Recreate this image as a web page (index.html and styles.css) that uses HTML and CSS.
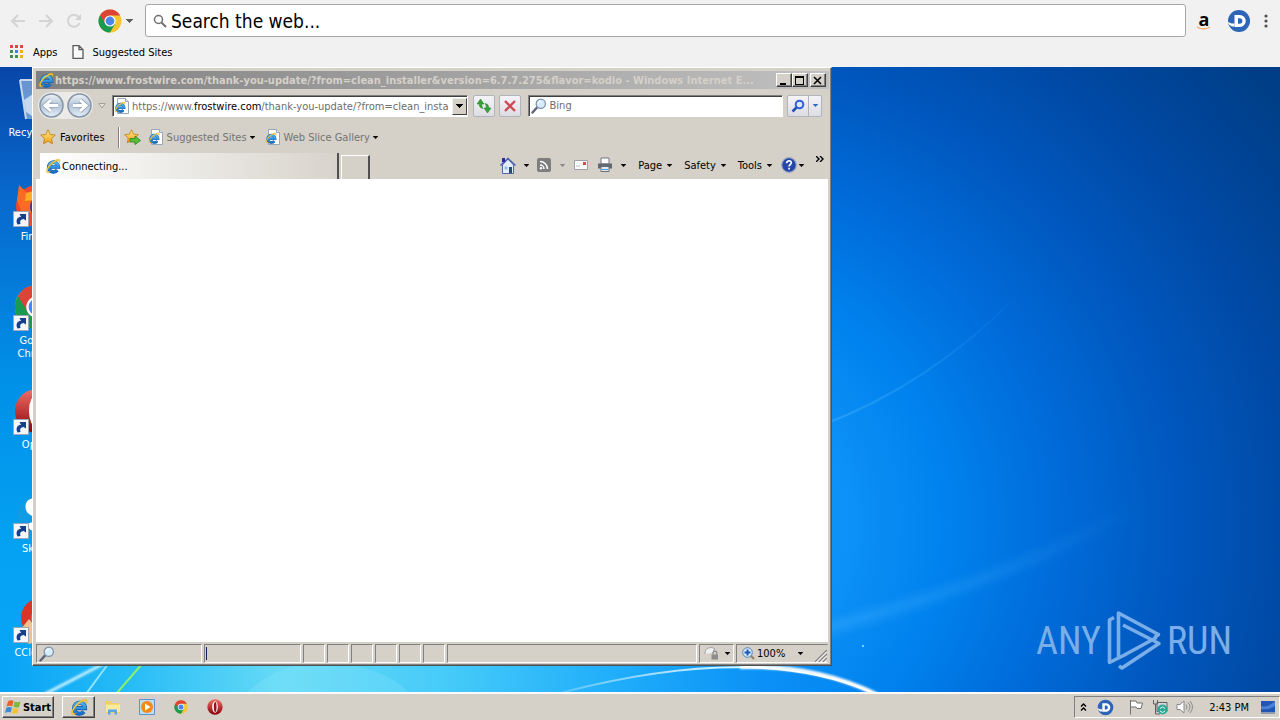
FILE: index.html
```html
<!DOCTYPE html>
<html lang="en">
<head>
<meta charset="utf-8">
<title>Desktop</title>
<link rel="stylesheet" href="styles.css">
</head>
<body>
<svg class="defs" aria-hidden="true">
  <defs>
    <linearGradient id="ieBlue" gradientUnits="userSpaceOnUse" x1="0" y1="2" x2="0" y2="15"><stop offset="0" stop-color="#5cc4f6"/><stop offset="1" stop-color="#1268c4"/></linearGradient>
    <linearGradient id="gold" x1="0" y1="0" x2="0" y2="1"><stop offset="0" stop-color="#fff08a"/><stop offset="1" stop-color="#f09a10"/></linearGradient>
    <linearGradient id="operaRed" x1="0" y1="0" x2="0" y2="1"><stop offset="0" stop-color="#f07068"/><stop offset="1" stop-color="#8c0008"/></linearGradient>
    <linearGradient id="glass" x1="0" y1="0" x2="0" y2="1"><stop offset="0" stop-color="#eef3f8"/><stop offset=".5" stop-color="#b4c4d6"/><stop offset="1" stop-color="#e4f0fa"/></linearGradient>
    <symbol id="ie" viewBox="0 0 16 16">
      <path d="M4 9h9.400A4.900 4.900 0 1 0 12.300 12.200" fill="none" stroke="#0d56a4" stroke-width="3.600"/>
      <path d="M4 9h9.400A4.900 4.900 0 1 0 12.300 12.200" fill="none" stroke="url(#ieBlue)" stroke-width="2.600"/>
      <path d="M2.500 14.800C.2 14 1.500 10 5 6.200 8.500 2.500 13 .2 14.600 1.600c.8.800.4 2.200-.3 3.400.2-1.400 0-2.200-.9-2.300-2-.2-5.400 2-8 5-2.300 2.600-3.400 5-2.500 5.800.6.500 1.700.2 3-.5-1.300 1.200-2.500 2-3.400 1.800z" fill="#ffd23c" stroke="#c98a10" stroke-width=".3"/>
    </symbol>
    <symbol id="iepage" viewBox="0 0 16 16">
      <path d="M3.500.5h8l3 3v12h-11z" fill="#fff" stroke="#9aa6b8"/>
      <path d="M11.500.5v3h3" fill="#dde6f2" stroke="#9aa6b8"/>
      <svg x="0" y="3" width="12" height="12"><use href="#ie"/></svg>
    </symbol>
    <symbol id="chrome" viewBox="0 0 24 24">
      <circle cx="12" cy="12" r="11.500" fill="#f7c52d"/>
      <path d="M12 12 2.040 6.250A11.500 11.500 0 0 0 12 23.500l5-8.600z" fill="#189a50"/>
      <path d="M2.040 6.250A11.500 11.500 0 0 1 21.960 6.250L21.900 6.500H12v5.500l-4.800 2.800z" fill="#dc4437"/>
      <circle cx="12" cy="12" r="5.600" fill="#fff"/><circle cx="12" cy="12" r="4.400" fill="#4a86ee"/>
    </symbol>
    <symbol id="opera" viewBox="0 0 24 24">
      <ellipse cx="12" cy="12" rx="11.500" ry="11.500" fill="url(#operaRed)"/>
      <ellipse cx="12" cy="12" rx="4.200" ry="8.600" fill="#fff"/><ellipse cx="12.300" cy="12" rx="2" ry="7.600" fill="#9c1018"/>
    </symbol>
    <symbol id="disc" viewBox="0 0 24 24">
      <circle cx="12" cy="12" r="11" fill="#2c64b8"/>
      <path d="M.8 12.500c2 1.800 4 2.400 6.700 2v3H5C2.500 16.500 1 14.700.8 12.500z" fill="#fff"/>
      <path d="M7.500 6h5.300a6 6 0 0 1 0 12H7.500zM11 9.200v5.600h1.600a2.800 2.800 0 0 0 0-5.600z" fill="#fff" fill-rule="evenodd"/>
    </symbol>
    <symbol id="caret" viewBox="0 0 7 4"><path d="M0 0h7v1H6v1H5v1H4v1H3V3H2V2H1V1H0z" fill="currentColor"/></symbol>
    <symbol id="lens" viewBox="0 0 16 16">
      <path d="M1.500 14.500 6 9.500" stroke="#5a6478" stroke-width="2.400" stroke-linecap="round"/>
      <circle cx="9.800" cy="5.800" r="4.600" fill="#d6ecfa" stroke="#7f93ac" stroke-width="1.300"/>
      <path d="M7 5.500a3 3 0 0 1 3-2.500" fill="none" stroke="#fff" stroke-width="1.200"/>
    </symbol>
    <symbol id="star" viewBox="0 0 16 16"><path d="m8 .8 2.200 4.700 5.100.6-3.800 3.500 1 5.200L8 12.200l-4.500 2.600 1-5.200L.7 6.100l5.100-.6z" fill="url(#gold)" stroke="#c07a10" stroke-width=".8"/></symbol>
    <symbol id="shortcut" viewBox="0 0 16 16">
      <path d="M.5.500h15v15H.5z" fill="#f4f6fa" stroke="#9aa8bc"/>
      <path d="M4.500 13.500C2.500 9.500 4 6.300 8 5.800L6.500 3H13v6.500L10.600 8C7.600 8.300 6.500 10 7.500 13z" fill="#163f8c"/>
    </symbol>
  </defs>
</svg>

<header class="browser">
  <div class="toolbar">
    <button class="nav" aria-label="Back"><svg width="16" height="16" viewBox="0 0 16 16"><path d="M15 8H2M8 2 2 8l6 6" fill="none" stroke="#d3d3d3" stroke-width="2"/></svg></button>
    <button class="nav" aria-label="Forward"><svg width="16" height="16" viewBox="0 0 16 16"><path d="M1 8h13M8 2l6 6-6 6" fill="none" stroke="#d3d3d3" stroke-width="2"/></svg></button>
    <button class="nav" aria-label="Reload"><svg width="16" height="16" viewBox="0 0 16 16"><path d="M13.500 10A6 6 0 1 1 12.600 4" fill="none" stroke="#d3d3d3" stroke-width="2"/><path d="M15 1v6H9z" fill="#d3d3d3"/></svg></button>
    <button class="engine" aria-label="Search engine"><svg width="24" height="24"><use href="#chrome"/></svg><svg class="caret" width="7" height="4"><use href="#caret"/></svg></button>
    <label class="omnibox">
      <svg width="14" height="14" viewBox="0 0 14 14"><circle cx="5.500" cy="5.500" r="4" fill="none" stroke="#707070" stroke-width="1.500"/><path d="m8.500 8.500 4.500 4.500" stroke="#707070" stroke-width="2"/></svg>
      <input type="text" placeholder="Search the web..." aria-label="Search the web">
    </label>
    <a class="ext" href="#" aria-label="Amazon"><span>a</span><svg width="16" height="4" viewBox="0 0 16 4"><path d="M1 1c4 2.500 9 2.500 13 0" fill="none" stroke="#f0a868" stroke-width="1.300"/></svg></a>
    <a class="ext-disc" href="#" aria-label="Extension"><svg width="24" height="24"><use href="#disc"/></svg></a>
    <button class="menu" aria-label="Menu"><svg width="4" height="14" viewBox="0 0 4 14" fill="#505050"><circle cx="2" cy="2" r="1.600"/><circle cx="2" cy="7" r="1.600"/><circle cx="2" cy="12" r="1.600"/></svg></button>
  </div>
  <nav class="bookmarks">
    <a href="#"><svg width="14" height="14" viewBox="0 0 14 14"><path d="M0 0h3v3H0zM5 0h3v3H5zM10 0h3v3h-3z" fill="#d8483c"/><path d="M0 5h3v3H0zM0 10h3v3H0zM5 10h3v3H5z" fill="#3f9055"/><path d="M5 5h3v3H5z" fill="#4080f0"/><path d="M10 5h3v3h-3zM10 10h3v3h-3z" fill="#eeb010"/></svg>Apps</a>
    <a href="#"><svg width="12" height="14" viewBox="0 0 12 14"><path d="M1 .700h6l4 4v8.600H1zM7 .700v4h4" fill="#fafafa" stroke="#5a5a5a" stroke-width="1.300"/></svg>Suggested Sites</a>
  </nav>
</header>

<main class="desktop">
  <svg class="wallpaper" viewBox="0 0 1280 625" preserveAspectRatio="none" aria-hidden="true">
    <defs>
      <radialGradient id="sky" gradientUnits="userSpaceOnUse" cx="0" cy="0" r="1" gradientTransform="translate(650 455) scale(780 700)">
        <stop offset="0" stop-color="#18a6fc"/><stop offset=".24" stop-color="#0d93f8"/><stop offset=".38" stop-color="#0082ee"/><stop offset=".52" stop-color="#006cda"/><stop offset=".68" stop-color="#0057be"/><stop offset=".84" stop-color="#0048a2"/><stop offset="1" stop-color="#003f88"/>
      </radialGradient>
      <linearGradient id="leftSky" x1="0" y1="0" x2="0" y2="1"><stop offset="0" stop-color="#0846a8"/><stop offset=".2" stop-color="#0868cc"/><stop offset=".5" stop-color="#0090e8"/><stop offset=".75" stop-color="#04a0f2"/><stop offset="1" stop-color="#0aa6f8"/></linearGradient>
      <linearGradient id="floor" x1="0" y1="0" x2="1" y2="0"><stop offset="0" stop-color="#08a2f6"/><stop offset=".1" stop-color="#26bcf6"/><stop offset=".22" stop-color="#66daf6"/><stop offset=".34" stop-color="#48ccf8"/><stop offset=".48" stop-color="#20aefa"/><stop offset=".6" stop-color="#0a90f6"/><stop offset=".72" stop-color="#0080ee" stop-opacity="0"/></linearGradient>
      <linearGradient id="ray" x1="0" y1="1" x2="1" y2="0"><stop offset="0" stop-color="#50b8ff" stop-opacity=".4"/><stop offset="1" stop-color="#50b8ff" stop-opacity="0"/></linearGradient>
      <linearGradient id="arc" gradientUnits="userSpaceOnUse" x1="560" y1="0" x2="880" y2="0"><stop offset="0" stop-color="#fff" stop-opacity=".2"/><stop offset=".5" stop-color="#d0f4ff"/><stop offset="1" stop-color="#fff"/></linearGradient>
      <filter id="soft" x="-10%" y="-30%" width="120%" height="160%"><feGaussianBlur stdDeviation="5"/></filter>
      <filter id="glow" x="-10%" y="-100%" width="120%" height="300%"><feGaussianBlur stdDeviation="1"/></filter>
    </defs>
    <rect width="1280" height="625" fill="url(#sky)"/>
    <rect width="400" height="625" fill="url(#leftSky)"/>
    <rect y="590" width="1280" height="35" fill="url(#floor)"/>
    <path d="M820 359Q930 318 1020 226" fill="none" stroke="url(#ray)" stroke-width="2"/>
    <path d="M800 568Q1020 512 1140 435" fill="none" stroke="url(#ray)" stroke-width="10" filter="url(#soft)"/>
    <path d="M45 627 103 597" stroke="#c8f2ff" stroke-width="3" filter="url(#glow)"/>
    <path d="M86 627 108 597" stroke="#90e4ff" stroke-width="2"/>
    <path d="M116 627 142 597" stroke="#8cf06a" stroke-width="2"/>
    <path d="M245 627Q290 585 350 598Q390 605 410 627z" fill="#a0f0ff" opacity=".18"/>
    <path d="M560 626Q760 574 875 627" fill="none" stroke="url(#arc)" stroke-width="2"/>
    <path d="M740 600Q815 597 878 628" fill="none" stroke="#fff" stroke-width="4" filter="url(#glow)"/>
    <circle cx="863" cy="579" r="1" fill="#a8e4ff"/>
  </svg>

  <ul class="shortcuts">
    <li><svg width="48" height="48" viewBox="0 0 48 48"><path d="M7 4h34l-6 39H13z" fill="#b8d4ec" opacity=".55"/><path d="M7 4h34M7 4l6 39" stroke="#c4d8ec" stroke-width="2"/><path d="M11 24l9-6 14 5-3 14-12 3-6-4z" fill="#dce8f4" opacity=".8"/></svg><span>Recycle Bin</span></li>
    <li><svg width="48" height="48" viewBox="0 0 48 48"><circle cx="24" cy="26" r="21" fill="#f04828"/><path d="M4 20 6 5l8 8 8-4 3 10-8 6 8 8H9z" fill="#fa6c24"/><circle cx="28" cy="27" r="11" fill="#503090"/><path d="M13 13q10-3 14 3l-6 4-9 1z" fill="#ffac28"/><svg y="31" width="16" height="16"><use href="#shortcut"/></svg></svg><span>Firefox</span></li>
    <li><svg width="48" height="48" viewBox="0 0 48 48"><svg x="1" y="0" width="46" height="46"><use href="#chrome"/></svg><svg y="31" width="16" height="16"><use href="#shortcut"/></svg></svg><span>Google Chrome</span></li>
    <li><svg width="48" height="48" viewBox="0 0 48 48"><svg x="1" y="0" width="46" height="46"><use href="#opera"/></svg><svg y="31" width="16" height="16"><use href="#shortcut"/></svg></svg><span>Opera</span></li>
    <li><svg width="48" height="48" viewBox="0 0 48 48"><circle cx="24" cy="23" r="20" fill="#109be4"/><path d="M34 12q-18-6-18 3 0 7 16 8M17 31q3 8 14 4" fill="none" stroke="#fff" stroke-width="7"/><svg y="31" width="16" height="16"><use href="#shortcut"/></svg></svg><span>Skype</span></li>
    <li><svg width="48" height="48" viewBox="0 0 48 48"><circle cx="28" cy="22" r="20" fill="#d83428"/><circle cx="29" cy="22" r="11" fill="#6894b8"/><path d="m3 39 13-16 16 20-16 5z" fill="#f0c090"/><svg y="31" width="16" height="16"><use href="#shortcut"/></svg></svg><span>CCleaner</span></li>
  </ul>

  <section class="window" aria-label="Internet Explorer">
    <div class="titlebar">
      <svg width="16" height="16"><use href="#ie"/></svg>
      <h1>https://www.frostwire.com/thank-you-update/?from=clean_installer&amp;version=6.7.7.275&amp;flavor=kodio - Windows Internet E...</h1>
      <div class="controls">
        <button aria-label="Minimize"><svg width="10" height="9"><path d="M1 7h6v2H1z"/></svg></button><button aria-label="Maximize"><svg width="10" height="9"><path d="M0 0h9v9H0zM1 2v6h7V2z" fill-rule="evenodd"/></svg></button><button class="close" aria-label="Close"><svg width="10" height="9"><path d="m1 1 7 7m0-7L1 8" stroke="#000" stroke-width="1.600"/></svg></button>
      </div>
    </div>

    <div class="address-row">
      <div class="travel">
        <button aria-label="Back"><svg width="25" height="25" viewBox="0 0 25 25"><circle cx="12.500" cy="12.500" r="11.500" fill="url(#glass)" stroke="#8494a8" stroke-width="1.500"/><path d="M6 12.500h13M12 7l-6 5.500 6 5.500" fill="none" stroke="#93a5bb" stroke-width="4.500"/><path d="M6 12.500h13M12 7l-6 5.500 6 5.500" fill="none" stroke="#fff" stroke-width="3"/></svg></button>
        <button aria-label="Forward"><svg width="25" height="25" viewBox="0 0 25 25"><circle cx="12.500" cy="12.500" r="11.500" fill="url(#glass)" stroke="#8494a8" stroke-width="1.500"/><path d="M6 12.500h13M13 7l6 5.500-6 5.500" fill="none" stroke="#93a5bb" stroke-width="4.500"/><path d="M6 12.500h13M13 7l6 5.500-6 5.500" fill="none" stroke="#fff" stroke-width="3"/></svg></button>
      </div>
      <button class="recent" aria-label="Recent pages"><svg width="8" height="6" viewBox="0 0 8 6"><path d="M.8.500h6.400L4 5z" fill="#e6e2dc" stroke="#a39e96"/></svg></button>
      <div class="field address">
        <svg width="16" height="16"><use href="#iepage"/></svg>
        <div class="url" role="textbox" contenteditable="true" spellcheck="false" aria-label="Address">https://www.<b>frostwire.com</b>/thank-you-update/?from=clean_insta</div>
        <button class="drop" aria-label="Show addresses"><svg width="7" height="4"><use href="#caret"/></svg></button>
      </div>
      <button class="tool" aria-label="Refresh"><svg width="16" height="16" viewBox="0 0 16 16"><path d="M4.500 1 1 6h2.200c0 2.500 1 4 3.800 4.500-1-1.300-1.300-2.500-1.200-4.500H8zM11.500 15 15 10h-2.200c0-2.500-1-4-3.800-4.500 1 1.300 1.300 2.500 1.200 4.500H8z" fill="#36a336" stroke="#1f7a28" stroke-width=".5"/></svg></button>
      <button class="tool" aria-label="Stop"><svg width="14" height="14" viewBox="0 0 14 14"><path d="m2 2 10 10M12 2 2 12" stroke="#cf4a56" stroke-width="2.400"/></svg></button>
      <label class="field search">
        <svg width="16" height="16"><use href="#lens"/></svg>
        <input type="text" placeholder="Bing" aria-label="Bing search">
      </label>
      <div class="search-buttons">
        <button aria-label="Search"><svg width="14" height="14" viewBox="0 0 14 14"><circle cx="8.500" cy="5.500" r="3.800" fill="#dce8ff" stroke="#3161d8" stroke-width="2"/><path d="m1.500 12.500 4-4" stroke="#2450b8" stroke-width="2.600"/></svg></button><button class="narrow" aria-label="Search options"><svg width="5" height="3"><use href="#caret"/></svg></button>
      </div>
    </div>

    <div class="favorites">
      <button class="fav"><svg width="16" height="16"><use href="#star"/></svg>Favorites</button>
      <span class="rule"></span>
      <button aria-label="Add to favorites"><svg width="17" height="16" viewBox="0 0 17 16"><svg width="15" height="15"><use href="#star"/></svg><path d="M6 9.500h5V7l5.500 4.500L11 15.500V13H6z" fill="#58c038" stroke="#28801c" stroke-width=".8"/></svg></button>
      <button class="link"><svg width="16" height="16"><use href="#iepage"/></svg>Suggested Sites<svg class="caret" width="5" height="3"><use href="#caret"/></svg></button>
      <button class="link"><svg width="16" height="16"><use href="#iepage"/></svg>Web Slice Gallery<svg class="caret" width="5" height="3"><use href="#caret"/></svg></button>
    </div>

    <div class="tabs">
      <button class="tab"><svg width="16" height="16"><use href="#ie"/></svg>Connecting...</button>
      <button class="newtab" aria-label="New tab"></button>
      <div class="commands">
        <button class="home" aria-label="Home"><svg width="16" height="17" viewBox="0 0 16 17"><path d="M2.500 8v8.500h11V8L8 2z" fill="#e6eefc" stroke="#5166a4"/><path d="M.5 8.500 8 1.500l7.500 7" fill="none" stroke="#4860ac" stroke-width="1.500"/><path d="M2 1h3v4H2z" fill="#2828a0"/><path d="M9 10h3v6H9z" fill="#214c7c"/><path d="M4.500 9.500h3v3h-3z" fill="#8cc0ec"/></svg><svg class="caret" width="5" height="3"><use href="#caret"/></svg></button>
        <button class="feed" aria-label="Feeds"><svg width="14" height="14" viewBox="0 0 14 14"><rect width="14" height="14" rx="2" fill="#7e7e7e"/><path d="M3 7a4 4 0 0 1 4 4M3 3.500a7.500 7.500 0 0 1 7.500 7.500" fill="none" stroke="#fff" stroke-width="1.500"/><circle cx="4" cy="10.200" r="1.200" fill="#fff"/></svg><svg class="caret" width="5" height="3"><use href="#caret"/></svg></button>
        <button class="mail" aria-label="Read mail"><svg width="14" height="10" viewBox="0 0 14 10"><path d="M.5.500h13v9H.5z" fill="#fbfbfb" stroke="#a0a0a8"/><path d="M9 2h3v3H9z" fill="#e04848"/><path d="M2 6h4" stroke="#c0c0c8"/></svg></button>
        <button class="print" aria-label="Print"><svg width="16" height="16" viewBox="0 0 16 16"><path d="M4 1h8v6H4z" fill="#fff" stroke="#707880"/><path d="M1 6.500h14v5H1z" fill="#636870"/><path d="M4 9.500h8v5H4z" fill="#dfeaf4" stroke="#6a7078"/><path d="M5 12.500h6" stroke="#48a0d8"/></svg><svg class="caret" width="5" height="3"><use href="#caret"/></svg></button>
        <button>Page<svg class="caret" width="5" height="3"><use href="#caret"/></svg></button>
        <button>Safety<svg class="caret" width="5" height="3"><use href="#caret"/></svg></button>
        <button>Tools<svg class="caret" width="5" height="3"><use href="#caret"/></svg></button>
        <button class="help" aria-label="Help"><svg width="16" height="16" viewBox="0 0 16 16"><circle cx="8" cy="8" r="7.300" fill="#2546a8" stroke="#9aa6c4" stroke-width="1.200"/><path d="M5.700 6.300c0-3.400 4.900-3 4.600-.3-.2 1.500-2.200 1.600-2.200 3.500M8.100 10.800v1.800" fill="none" stroke="#fff" stroke-width="1.700"/></svg><svg class="caret" width="5" height="3"><use href="#caret"/></svg></button>
        <button class="more" aria-label="More commands"><svg width="8" height="6" viewBox="0 0 8 6"><path d="m0 0 3 3-3 3M4 0l3 3-3 3" fill="none" stroke="#000" stroke-width="1.400"/></svg></button>
      </div>
    </div>

    <div class="page"></div>

    <footer class="status">
      <div class="cell first"><svg width="16" height="16"><use href="#lens"/></svg></div>
      <div class="cell progress"><i></i></div>
      <div class="cell small"></div><div class="cell small"></div><div class="cell small"></div><div class="cell small"></div><div class="cell small"></div><div class="cell small"></div>
      <div class="cell zone"></div>
      <button class="cell lock" aria-label="Protected mode"><svg width="16" height="15" viewBox="0 0 16 15"><path d="M1 8a6 6 0 0 1 10-5l-2 2 4 1" fill="#f0f0f0" stroke="#a0a0a0"/><path d="M7.500 8.500h6.500v5H7.500z" fill="#8c8c8c"/><path d="M9 8.500V6.500a2 2 0 0 1 3.800 0v2" fill="none" stroke="#8c8c8c" stroke-width="1.300"/></svg><svg class="caret" width="5" height="3"><use href="#caret"/></svg></button>
      <button class="cell zoom"><svg width="13" height="13" viewBox="0 0 13 13"><path d="m8 8 4 4" stroke="#9a8468" stroke-width="2.400"/><circle cx="5.500" cy="5.500" r="4.800" fill="#d8ecfc" stroke="#5080b8"/><path d="M5.500 2.500v6M2.500 5.500h6" stroke="#1858b8" stroke-width="2"/></svg><span>100%</span><svg class="caret" width="5" height="3"><use href="#caret"/></svg><svg class="grip" width="12" height="12" viewBox="0 0 12 12"><path d="M0 12 12 0M4 12l8-8M8 12l4-4" stroke="#808080" stroke-width="1.300"/><path d="m1.500 12 10.500-10.500M5.500 12 12 5.500M9.500 12 12 9.500" stroke="#fff"/></svg></button>
    </footer>
  </section>

  <div class="brand" aria-label="ANY RUN">
    <span>ANY</span>
    <svg width="56" height="62" viewBox="0 0 56 62" fill="none" stroke="currentColor" stroke-width="3.600" stroke-linejoin="round"><path d="M8 7.500 3.500 10v42.500l14-7 33-18"/><path d="M12.500 47V3l40 21.500-4 3M17 15l36 18.500L16 58l-3-2"/></svg>
    <span>RUN</span>
  </div>
</main>

<footer class="taskbar">
  <button class="start"><svg width="17" height="16" viewBox="0 0 17 16"><path d="M3 2.500Q6 .5 8.500 2L7.300 7.300Q4.500 6 1.500 7.600z" fill="#e8602c"/><path d="M9.500 2.500q3 1.500 6 0L14 8q-2.800 1.200-5.500-.3z" fill="#7cb83c"/><path d="M1.300 8.800Q4 7.200 7 8.500l-1.300 5Q3 12.500 0 14z" fill="#4088d8"/><path d="M8.200 9q2.700 1.400 5.600.2l-1.400 5q-3 1.300-5.500-.2z" fill="#f4c430"/></svg>Start</button>
  <div class="pinned">
    <button class="active" aria-label="Internet Explorer"><svg width="18" height="18"><use href="#ie"/></svg></button>
    <button aria-label="Explorer"><svg width="17" height="16" viewBox="0 0 17 16"><path d="M1 2h6l1 2h7v10H1z" fill="#f0cf68"/><path d="M2 5.500h14V13H2z" fill="#fbe9a0"/><path d="M4 15.500v-5h9v5h-2.500v-2.500h-4v2.500z" fill="#58a8e0"/></svg></button>
    <button aria-label="Media Player"><svg width="16" height="16" viewBox="0 0 16 16"><path d="M.5.500h15v15H.5z" fill="#bcdcf8" stroke="#5c94cc"/><circle cx="8" cy="8" r="6" fill="#f48818"/><path d="m6 4.500 5.500 3.500L6 11.500z" fill="#fff"/></svg></button>
    <button aria-label="Chrome"><svg width="14" height="14"><use href="#chrome"/></svg></button>
    <button aria-label="Opera"><svg width="16" height="16"><use href="#opera"/></svg></button>
  </div>
  <div class="tray">
    <button aria-label="Show hidden icons"><svg width="7" height="8" viewBox="0 0 7 8"><path d="m1 3.500 2.500-2.500L6 3.500M1 7.500 3.500 5 6 7.500" fill="none" stroke="#000" stroke-width="1.400"/></svg></button>
    <svg class="tray-disc" width="17" height="17"><use href="#disc"/></svg>
    <svg width="16" height="16" viewBox="0 0 16 16"><path d="M2.500 1v14.500M2.500 2H8l1 2h5.500L13 9.500H9L8 8H2.500" fill="#fff" stroke="#707070"/></svg>
    <svg width="16" height="16" viewBox="0 0 16 16"><path d="M5 3.500h10v9H5z" fill="#d8d8d8" stroke="#606060"/><path d="M1.500 1v4h4V1M3.500 5v10H8" fill="none" stroke="#606060"/><circle cx="10.500" cy="10.500" r="5" fill="#2fa898"/><path d="M8 9.500q2.500-3 5 0M13 12q-2.500 3-5 0" fill="none" stroke="#d8fff4"/></svg>
    <svg width="17" height="16" viewBox="0 0 17 16"><path d="M1 5.500h3L8 2v12l-4-3.500H1z" fill="#fff" stroke="#888"/><path d="M10 5.500q2 2.500 0 5M12 3.500q4 4.500 0 9M14 2q5 6 0 12" fill="none" stroke="#8a8a8a"/></svg>
    <time>2:43 PM</time>
    <button aria-label="Show desktop"><svg width="14" height="13" viewBox="0 0 14 13"><path d="M0 0h14v11H0z" fill="#2454b4"/><path d="M0 5Q7 7 14 0v5Q8 9 0 8z" fill="#4a80d8"/><path d="M0 11h14v2H0z" fill="#909aac"/></svg></button>
  </div>
</footer>
</body>
</html>
```

FILE: styles.css
```css
* { box-sizing: border-box; }

body {
  margin: 0;
  min-height: 100vh;
  display: flex;
  flex-direction: column;
  overflow: hidden;
  background: #d5d0c8;
  color: #000;
  font: 11px/13px Tahoma, "DejaVu Sans Condensed", "DejaVu Sans", sans-serif;
}

button {
  display: flex;
  align-items: center;
  justify-content: center;
  margin: 0;
  padding: 0;
  border: 0;
  background: none;
  color: inherit;
  font: inherit;
  white-space: nowrap;
}

input {
  min-width: 0;
  flex: 1;
  padding: 0;
  border: 0;
  outline: 0;
  background: none;
  font: inherit;
}

svg { flex: none; }
a { color: inherit; text-decoration: none; }
.defs { position: absolute; width: 0; height: 0; }

/* Browser bars */
.browser { background: #f1f1f1; height: 67px; }
.toolbar { display: flex; align-items: center; height: 41px; padding: 0 10px; }
.nav { width: 16px; margin-right: 12px; }
.engine { gap: 4px; margin: 0 12px 0 4px; color: #606060; }
.omnibox {
  flex: 1;
  display: flex;
  align-items: center;
  gap: 4px;
  height: 33px;
  padding: 0 7px;
  border: 1px solid #a6a6a6;
  border-radius: 3px;
  background: #fff;
  font-size: 19px;
}
.omnibox input { height: 30px; }
.omnibox input::placeholder { color: #000; opacity: 1; }
.ext {
  display: flex;
  flex-direction: column;
  align-items: center;
  width: 18px;
  margin: 0 14px 0 9px;
  font: bold 18px/14px "Open Sans", sans-serif;
}
.ext-disc { display: flex; margin-right: 13px; }
.menu { width: 4px; margin-right: 2px; }
.bookmarks { display: flex; gap: 14px; padding: 4px 10px; }
.bookmarks a { display: flex; align-items: center; gap: 9px; height: 14px; }

/* Desktop */
.desktop { flex: 1; position: relative; overflow: hidden; min-height: 480px; }
.wallpaper { position: absolute; inset: 0; width: 100%; height: 100%; }
.shortcuts {
  position: relative;
  width: 74px;
  margin: 0;
  padding: 9px 0 0;
  list-style: none;
  color: #fff;
  text-align: center;
}
.shortcuts li { display: flex; flex-direction: column; align-items: center; height: 104px; gap: 2px; }
.shortcuts li:last-child { height: auto; }

.brand {
  position: absolute;
  right: 48px;
  bottom: 20px;
  display: flex;
  align-items: center;
  gap: 5px;
  color: #7aaee8;
  font: 38px/44px "Roboto Condensed", "Liberation Sans Narrow", "Roboto", sans-serif;
}

/* Window */
.window {
  position: absolute;
  left: 32px;
  top: 0;
  bottom: 26px;
  width: calc(100% - 480px);
  display: flex;
  flex-direction: column;
  padding: 3px 2px 2px 3px;
  border: 1px solid #fff;
  border-right-color: #505050;
  border-bottom-color: #505050;
  background: #d5d0c8;
  box-shadow: inset -1px -1px #808080;
}
.titlebar {
  display: flex;
  align-items: center;
  gap: 1px;
  height: 18px;
  padding: 0 3px 0 2px;
  background: linear-gradient(90deg, #808080, #c0c0c0);
  color: #d5d0c8;
}
.titlebar h1 {
  flex: 1;
  min-width: 0;
  margin: 0 5px 0 0;
  overflow: hidden;
  text-overflow: ellipsis;
  white-space: nowrap;
  font-size: 11px;
  font-weight: bold;
}
.controls { display: flex; }
.controls button {
  width: 16px;
  height: 14px;
  border: 1px solid #fff;
  border-right-color: #404040;
  border-bottom-color: #404040;
  background: #d5d0c8;
  box-shadow: inset -1px -1px #808080;
}
.controls .close { margin-left: 2px; }

.address-row { display: flex; align-items: center; height: 33px; padding: 0 7px 0 2px; }
.travel { display: flex; gap: 3px; padding: 1px; border-radius: 14px; background: #eceae6; }
.recent { margin: 0 6px 0 5px; }
.field {
  display: flex;
  align-items: center;
  height: 22px;
  border: 1px solid #808080;
  border-right-color: #fff;
  border-bottom-color: #fff;
  background: #fff;
  box-shadow: inset 1px 1px #404040;
  color: #6d6d6d;
}
.address { flex: 359; min-width: 0; padding: 2px 0 1px 1px; gap: 2px; margin-right: 5px; }
.url { flex: 1; min-width: 0; overflow: hidden; white-space: nowrap; outline: 0; }
.url b { color: #000; font-weight: normal; }
.drop {
  flex: none;
  width: 15px;
  height: 17px;
  border: 1px solid #f4f2ee;
  border-right-color: #404040;
  border-bottom-color: #404040;
  background: #d5d0c8;
  color: #000;
}
.tool, .search-buttons {
  width: 22px;
  height: 22px;
  border: 1px solid #b0b4bc;
  border-radius: 2px;
  background: linear-gradient(#f4f4f8, #dcdce2);
}
.tool { margin-right: 4px; }
.search { flex: 254; min-width: 0; margin: 0 4px 0 3px; padding: 0 2px; gap: 3px; }
.search input::placeholder { color: #6d6d6d; opacity: 1; }
.search-buttons { display: flex; width: 35px; color: #2c68c8; }
.search-buttons button { flex: 1; }
.search-buttons .narrow { flex: none; width: 13px; border-left: 1px solid #b0b4bc; }

.favorites { display: flex; align-items: center; height: 30px; padding-left: 4px; }
.favorites button { gap: 4px; }
.rule { width: 2px; height: 21px; margin: 0 4px 0 13px; border-left: 1px solid #808080; border-right: 1px solid #fff; }
.favorites .link { margin-left: 7px; gap: 3px; }
.favorites .link + .link { margin-left: 10px; }
.link { color: #747474; }
.caret { color: #000; }
.engine .caret { color: #606060; }
.search-buttons .caret { color: inherit; }

.tabs { display: flex; align-items: flex-end; height: 27px; padding-left: 4px; }
.tab {
  flex: 0 1 299px;
  justify-content: flex-start;
  gap: 1px;
  height: 26px;
  padding-left: 5px;
  border-right: 2px solid #505050;
  background: linear-gradient(90deg, #fff, #d8d4cc);
}
.newtab { width: 29px; height: 24px; margin-left: 2px; border: 1px solid #fff; border-width: 1px 2px 0 1px; border-right-color: #505050; }
.commands { display: flex; align-items: center; height: 28px; margin-left: auto; padding-right: 5px; }
.commands button { gap: 5px; margin-left: 12px; }
.commands .home { gap: 8px; }
.commands .feed { gap: 9px; margin-left: 8px; }
.feed .caret { color: #8a8a8a; }
.commands .mail, .commands .print { gap: 8px; margin-left: 9px; }
.commands .help { gap: 2px; margin-left: 9px; }
.commands .more { margin: 0 0 12px 12px; }

.page { flex: 1; background: #fff; margin-right: 1px; }

.status { display: flex; gap: 2px; height: 21px; padding-top: 2px; margin-right: 1px; }
.cell {
  display: flex;
  align-items: center;
  border: 1px solid #808080;
  border-right-color: #fff;
  border-bottom-color: #fff;
}
.first { width: 166px; padding-left: 2px; }
.progress { width: 97px; padding-left: 1px; }
.progress i { width: 1px; height: 13px; background: #14205c; }
.small { width: 22px; }
.zone { flex: 1; }
.lock { width: 35px; gap: 5px; }
.zoom { width: 92px; justify-content: flex-start; gap: 2px; padding-left: 5px; border-right-color: transparent; }
.zoom .caret { margin: 0 auto; }
.grip { align-self: flex-end; }

/* Taskbar */
.taskbar {
  display: flex;
  align-items: center;
  height: 28px;
  padding: 0 0 0 2px;
  border-top: 2px solid #fbfaf8;
  background: #d5d0c8;
}
.start, .active {
  height: 22px;
  border: 1px solid #fff;
  border-right-color: #404040;
  border-bottom-color: #404040;
  box-shadow: inset -1px -1px #808080;
}
.start { width: 52px; gap: 1px; font-weight: bold; font-size: 11px; }
.pinned { display: flex; margin-left: 8px; gap: 1px; }
.pinned button { width: 33px; height: 22px; }
.tray {
  display: flex;
  align-items: center;
  align-self: stretch;
  gap: 8px;
  margin: 2px 0 2px auto;
  padding: 0 4px 0 5px;
  border: 1px solid #808080;
  border-right-color: #fff;
  border-bottom-color: #fff;
}
.tray-disc { margin: 0 6px 0 2px; }
.tray time { margin: 0 4px 0 8px; }
```
